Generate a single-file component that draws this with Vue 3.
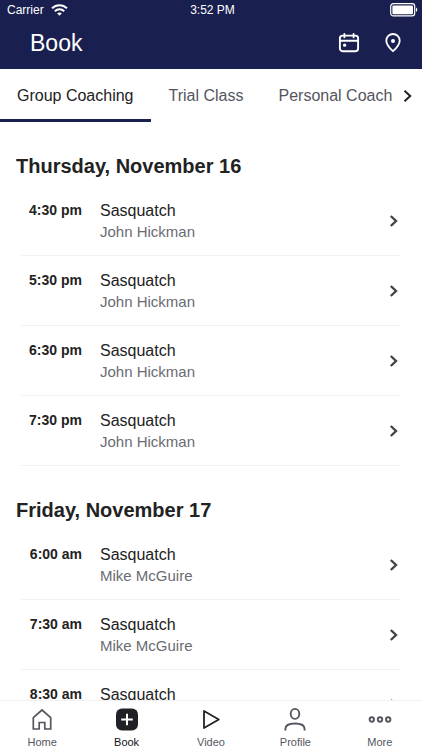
<script setup>
import { ref } from 'vue'

const tabs = ['Group Coaching', 'Trial Class', 'Personal Coaching']
const activeTab = ref('Group Coaching')

const days = [
  {
    date: 'Thursday, November 16',
    classes: ['4:30 pm', '5:30 pm', '6:30 pm', '7:30 pm'].map((time) => ({ time, name: 'Sasquatch', coach: 'John Hickman' })),
  },
  {
    date: 'Friday, November 17',
    classes: ['6:00 am', '7:30 am', '8:30 am'].map((time) => ({ time, name: 'Sasquatch', coach: 'Mike McGuire' })),
  },
]

const navItems = ['Home', 'Book', 'Video', 'Profile', 'More']
const activeNav = ref('Book')
</script>

<template>
  <div class="app">
    <header class="header">
      <div class="status">
        <div class="carrier">
          <span>Carrier</span>
          <svg width="17" height="12" viewBox="0 0 17 12" fill="none" stroke="#fff" stroke-width="2" aria-hidden="true">
            <path d="M1 4.3C5.2.2 11.8.2 16 4.3M3.8 7.2c2.7-2.6 6.7-2.6 9.4 0" />
            <path d="M8.5 11.8 6.1 9.3c1.4-1.2 3.4-1.2 4.8 0Z" fill="#fff" stroke="none" />
          </svg>
        </div>
        <span>3:52 PM</span>
        <svg class="battery" width="28" height="14" viewBox="0 0 28 14" aria-hidden="true">
          <rect x=".7" y=".7" width="24" height="12.2" rx="2.6" fill="none" stroke="#fff" stroke-width="1.2" />
          <rect x="2.4" y="2.4" width="20.6" height="8.8" rx="1" fill="#fff" />
          <path d="M26 4.6c1.8.8 1.8 3.6 0 4.4Z" fill="#fff" />
        </svg>
      </div>
      <div class="title-bar">
        <h1>Book</h1>
        <div class="actions">
          <button type="button" aria-label="Calendar">
            <svg width="22" height="22" viewBox="0 0 22 22" fill="none" stroke="#fff" stroke-width="1.9" stroke-linecap="round">
              <rect x="1.9" y="3.6" width="18.2" height="15.6" rx="2.6" />
              <path d="M2 8.8h18M6.4 1.9v3.4M15.6 1.9v3.4" />
              <circle cx="6.6" cy="13.2" r="1.6" fill="#fff" stroke="none" />
            </svg>
          </button>
          <button type="button" aria-label="Location">
            <svg width="22" height="22" viewBox="0 0 22 22" fill="none" stroke="#fff" stroke-width="1.8" stroke-linejoin="round">
              <path d="M11 19.2c-1.6-1.5-6.7-6-6.7-10.5a6.700 6.700 0 0 1 13.400 0C17.700 13.200 12.600 17.700 11 19.2Z" />
              <circle cx="11" cy="8.900" r="2" fill="#fff" stroke="none" />
            </svg>
          </button>
        </div>
      </div>
    </header>

    <div class="tab-bar">
      <div class="tabs" role="tablist">
        <button
          v-for="tab in tabs"
          :key="tab"
          type="button"
          role="tab"
          class="tab"
          :class="{ active: tab === activeTab }"
          :aria-selected="tab === activeTab"
          @click="activeTab = tab"
        >{{ tab }}</button>
      </div>
      <button type="button" class="more-tabs" aria-label="More tabs">
        <svg width="10" height="14" viewBox="0 0 10 14" fill="none" stroke="#222" stroke-width="2"><path d="m1.500 1.800 5.700 5.200-5.700 5.200" /></svg>
      </button>
    </div>

    <main class="schedule">
      <section v-for="day in days" :key="day.date" class="day">
        <h2>{{ day.date }}</h2>
        <ul>
          <li v-for="item in day.classes" :key="item.time">
            <a href="#" class="slot" @click.prevent>
              <time>{{ item.time }}</time>
              <span class="details">
                <span class="name">{{ item.name }}</span>
                <span class="coach">{{ item.coach }}</span>
              </span>
              <svg width="10" height="14" viewBox="0 0 10 14" fill="none" stroke="#444" stroke-width="2.400" aria-hidden="true"><path d="m1.800 2 5.200 5-5.200 5" /></svg>
            </a>
          </li>
        </ul>
      </section>
    </main>

    <nav class="bottom-nav">
      <a
        v-for="item in navItems"
        :key="item"
        href="#"
        :class="{ active: item === activeNav }"
        @click.prevent="activeNav = item"
      >
        <svg width="24" height="24" viewBox="0 0 24 24" fill="none" stroke="#54565e" stroke-width="1.700" aria-hidden="true">
          <path v-if="item === 'Home'" d="M3.300 22V10.600L12 3l8.700 7.600V22h-5.900v-6.500H9.200V22Z" />
          <template v-else-if="item === 'Book'">
            <rect x="1" y="1.500" width="22" height="22" rx="6" fill="#202126" stroke="none" />
            <path d="M12 6.700v11.600M6.200 12.500h11.600" stroke="#fff" stroke-width="2" />
          </template>
          <path v-else-if="item === 'Video'" d="M5 4v17L19.800 12.500Z" stroke="#222" stroke-width="1.800" stroke-linejoin="round" />
          <template v-else-if="item === 'Profile'">
            <ellipse cx="12" cy="6.900" rx="4.300" ry="5" stroke-width="1.900" />
            <path d="M2.400 23.600V22c0-3.200 3.400-5.500 9.600-5.500s9.600 2.300 9.600 5.500v1.600" stroke-width="1.900" />
          </template>
          <template v-else>
            <circle cx="3.800" cy="12.500" r="2.200" stroke-width="1.900" />
            <circle cx="12" cy="12.500" r="2.200" stroke-width="1.900" />
            <circle cx="20.200" cy="12.500" r="2.200" stroke-width="1.900" />
          </template>
        </svg>
        <span>{{ item }}</span>
      </a>
    </nav>
  </div>
</template>

<style>
body {
  margin: 0;
  background: #fff;
}
</style>

<style scoped>
.app {
  display: flex;
  flex-direction: column;
  height: 100vh;
  overflow: hidden;
  font-family: "Liberation Sans", Arial, sans-serif;
  color: #222;
}
button {
  padding: 0;
  border: 0;
  background: none;
  font: inherit;
  color: inherit;
  cursor: pointer;
}
a {
  color: inherit;
  text-decoration: none;
}
svg {
  display: block;
  flex: none;
}
.header {
  flex: none;
  background: #19204f;
  color: #fff;
}
.status {
  display: grid;
  grid-template-columns: 1fr auto 1fr;
  align-items: center;
  height: 20px;
  padding: 0 4px 0 7px;
  font-size: 12px;
}
.carrier {
  display: flex;
  align-items: center;
  gap: 7px;
}
.battery {
  justify-self: end;
}
.title-bar {
  display: flex;
  align-items: center;
  justify-content: space-between;
  height: 49px;
  padding: 0 18px 3px 30px;
  box-sizing: border-box;
}
h1 {
  margin: 0;
  font-size: 23px;
  font-weight: 400;
}
.actions {
  display: flex;
  gap: 22px;
}
.tab-bar {
  display: flex;
  flex: none;
  height: 53px;
}
.tabs {
  display: flex;
  gap: 1px;
  flex: 1;
  min-width: 0;
  overflow: hidden;
}
.tab {
  flex: none;
  padding: 0 17px;
  border-top: 3px solid transparent;
  border-bottom: 3px solid transparent;
  font-size: 16px;
  color: #54565e;
}
.tab.active {
  border-bottom-color: #19204f;
  color: #222;
}
.more-tabs {
  flex: none;
  padding: 0 9px 0 10px;
}
.schedule {
  flex: 1;
  min-height: 0;
  overflow: hidden;
  padding: 0 21px 0 16px;
}
.day {
  padding-top: 32px;
}
h2 {
  margin: 0;
  font-size: 20px;
  line-height: 24px;
  font-weight: 700;
}
ul {
  margin: 0;
  padding: 8px 0 0 5px;
  list-style: none;
}
.slot {
  display: flex;
  height: 69px;
  align-items: center;
  padding-right: 2px;
  border-bottom: 1px solid #f1f1f2;
}
time {
  width: 61px;
  margin-right: 18px;
  text-align: right;
  font-size: 14px;
  font-weight: 700;
  line-height: 21px;
  align-self: flex-start;
  padding-top: 14px;
}
.details {
  display: flex;
  flex: 1;
  flex-direction: column;
  align-self: flex-start;
  padding-top: 14px;
  line-height: 21px;
}
.name {
  font-size: 16px;
}
.coach {
  font-size: 15px;
  color: #6a6b72;
}
.bottom-nav {
  display: grid;
  grid-template-columns: repeat(5, 1fr);
  flex: none;
  height: 50px;
  border-top: 1px solid #f1f1f2;
  box-sizing: border-box;
}
.bottom-nav a {
  display: flex;
  flex-direction: column;
  align-items: center;
  padding-top: 6px;
  gap: 4px;
  font-size: 11px;
  line-height: 14px;
  color: #54565e;
}
.bottom-nav a.active {
  color: #111;
}
</style>
